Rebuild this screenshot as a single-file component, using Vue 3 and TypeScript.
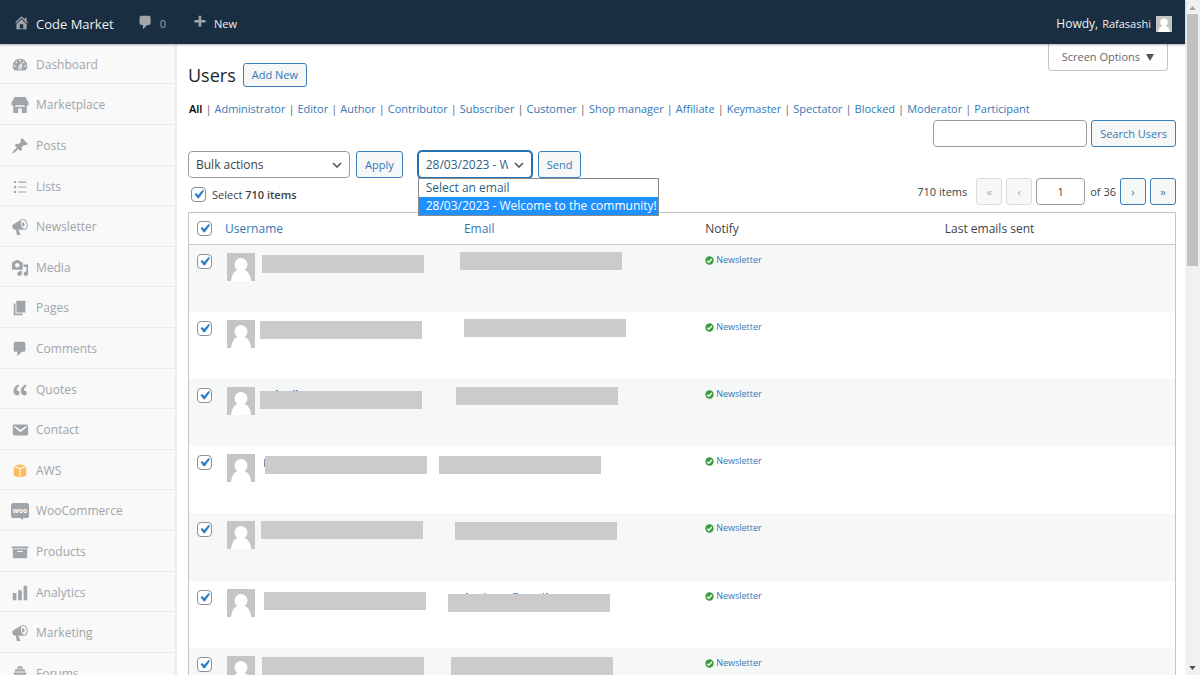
<script setup lang="ts">
import { computed, ref } from 'vue'

interface MenuItem {
  label: string
  icon: string
}

interface Mark {
  x: number
  y: number
  w: number
  h: number
  color: string
}

interface Mask {
  left: number
  top: number
  marks?: Mark[]
}

interface UserRow {
  id: number
  checked: boolean
  name: Mask
  email: Mask
}

const icons: Record<string, string> = {
  home: 'M16 8.5l1.53 1.53-1.06 1.06L10 4.6l-6.47 6.49-1.06-1.06L10 2.5l4 4v-2h2v4zm-6-2.46l6 5.99V18H4v-5.97zM12 17v-5H8v5h4z',
  comment:
    'M5 2h9c1.1 0 2 .9 2 2v7c0 1.1-.9 2-2 2h-2l-5 5v-5H5c-1.1 0-2-.9-2-2V4c0-1.1.9-2 2-2z',
  plus: 'M17 7v3h-5v5H9v-5H4V7h5V2h3v5h5z',
  dashboard:
    'M3.76 16h12.48A7.998 7.998 0 0 0 10 3a7.998 7.998 0 0 0-6.24 13zM10 4c.55 0 1 .45 1 1s-.45 1-1 1-1-.45-1-1 .45-1 1-1zM6 6c.55 0 1 .45 1 1s-.45 1-1 1-1-.45-1-1 .45-1 1-1zm8 0c.55 0 1 .45 1 1s-.45 1-1 1-1-.45-1-1 .45-1 1-1zm-5.37 5.55L12 7v6c0 1.1-.9 2-2 2s-2-.9-2-2c0-.57.24-1.08.63-1.45zM4 10c.55 0 1 .45 1 1s-.45 1-1 1-1-.45-1-1 .45-1 1-1zm12 0c.55 0 1 .45 1 1s-.45 1-1 1-1-.45-1-1 .45-1 1-1zm-5 3c0-.55-.45-1-1-1s-1 .45-1 1 .45 1 1 1 1-.45 1-1z',
  store:
    'M4 1h12l3.500 6.500v1.500c0 1.200-.9 2-2 2.200V19H12v-5H8v5H2.500v-7.800C1.400 11 .5 10.200.5 9V7.500zM4.500 10.800v1.200h11v-1.200c-.8 0-1.600-.3-2.200-.9-.8.700-2.200.9-3.300.1-1.100.8-2.500.6-3.300-.1-.6.600-1.400.9-2.200.9z',
  pin: 'M10.44 3.02l1.82-1.82 6.36 6.35-1.83 1.82c-1.05-.68-2.48-.57-3.41.36l-.75.75c-.92.93-1.04 2.35-.35 3.41l-1.83 1.82-2.41-2.41-2.8 2.79c-.42.42-3.38 2.71-3.8 2.29s1.86-3.39 2.28-3.81l2.79-2.79L4.1 9.36l1.83-1.82c1.05.69 2.48.57 3.4-.36l.75-.75c.93-.92 1.05-2.35.36-3.41z',
  list: 'M4.5 3.2a1.3 1.3 0 1 1 0 2.6 1.3 1.3 0 0 1 0-2.6zM8 4h9v1.2H8zM4.5 8.7a1.3 1.3 0 1 1 0 2.6 1.3 1.3 0 0 1 0-2.6zM8 9.4h9v1.2H8zM4.5 14.2a1.3 1.3 0 1 1 0 2.6 1.3 1.3 0 0 1 0-2.6zM8 15h9v1.2H8z',
  megaphone:
    'M18.15 5.94c.46 1.62.38 3.22-.02 4.48-.42 1.28-1.26 2.18-2.3 2.48-.16.06-.26.06-.4.06-.06.02-.12.02-.18.02-.06.02-.14.02-.22.02h-6.8l2.22 5.5c.02.14-.06.26-.14.34-.08.1-.24.16-.34.16H6.95c-.1 0-.26-.06-.34-.16-.08-.08-.16-.2-.14-.34l-1-5.5H4.25l-.02-.02c-.5.06-1.08-.18-1.54-.62s-.88-1.08-1.06-1.88c-.24-.8-.2-1.56-.02-2.2.18-.62.58-1.08 1.06-1.3l.02-.02 9-5.4c.1-.06.18-.1.24-.16.06-.04.14-.08.24-.12.16-.08.28-.12.5-.18 1.04-.3 2.24.1 3.22.98s1.84 2.24 2.26 3.86zm-2.58 5.98h-.02c.4-.1.74-.34 1.04-.7.58-.7.86-1.76.86-3.04 0-.64-.1-1.3-.28-1.98-.34-1.36-1.02-2.5-1.78-3.24s-1.68-1.1-2.46-.88c-.82.22-1.4.96-1.7 2-.32 1.04-.28 2.36.06 3.72.38 1.36 1 2.5 1.8 3.24.78.74 1.62 1.1 2.48.88zm-2.54-7.08c.22-.04.42-.02.62.04.38.16.76.48 1.02 1s.42 1.2.42 1.78c0 .3-.04.56-.12.8-.18.48-.44.84-.86.94-.34.1-.8-.06-1.14-.4s-.64-.86-.78-1.5c-.18-.62-.12-1.24.02-1.72s.48-.84.82-.94z',
  media:
    'M13 11V4c0-.55-.45-1-1-1h-1.67L9 1H5L3.67 3H2c-.55 0-1 .45-1 1v7c0 .55.45 1 1 1h10c.55 0 1-.45 1-1zM7 4.5c1.38 0 2.5 1.12 2.5 2.5S8.38 9.5 7 9.5 4.5 8.38 4.5 7 5.62 4.5 7 4.5zM14 6h5v10.5c0 1.38-1.12 2.5-2.5 2.5S14 17.88 14 16.5s1.12-2.5 2.5-2.5c.17 0 .34.02.5.05V9h-3V6zm-4 8.05V13h2v3.5c0 1.38-1.12 2.5-2.5 2.5S7 17.88 7 16.5 8.12 14 9.5 14c.17 0 .34.02.5.05z',
  page: 'M6 15V2h10v13H6zm-1 1h8v2H3V5h2v11z',
  quote:
    'M9.49 13.22c0-.74-.2-1.38-.61-1.9-.62-.78-1.83-.88-2.53-.72-.29-1.65 1.11-3.75 2.92-4.65L7.88 4c-2.73 1.3-5.42 4.28-4.96 8.05C3.21 14.43 4.59 16 6.54 16c.85 0 1.56-.25 2.12-.75s.83-1.18.83-2.03zm8.05 0c0-.74-.2-1.38-.61-1.9-.63-.78-1.83-.88-2.53-.72-.29-1.65 1.11-3.75 2.92-4.65L15.93 4c-2.73 1.3-5.41 4.28-4.95 8.05.29 2.38 1.66 3.95 3.61 3.95.85 0 1.56-.25 2.12-.75s.83-1.18.83-2.03z',
  email:
    'M3.87 4h13.25C18.37 4 19 4.59 19 5.79v8.42c0 1.19-.63 1.79-1.88 1.79H3.87c-1.25 0-1.88-.6-1.88-1.79V5.79c0-1.2.63-1.79 1.88-1.79zm6.62 8.6l6.74-5.53c.24-.2.43-.66.13-1.07-.29-.41-.82-.42-1.17-.17l-5.7 3.86L4.8 5.83c-.35-.25-.88-.24-1.17.17-.3.41-.11.87.13 1.07z',
  archive: 'M19 4v2H1V4h18zM2 7h16v10H2V7zm11 3V9H7v1h6z',
  chart: 'M18 18V2h-4v16h4zm-6 0V7H8v11h4zm-6 0v-8H2v8h4z',
  hive: 'M8 1.5h4l1.5 2.3h-7zM5 4.8h10l1.2 2.4H3.800zM3 8.400h14v2.400H3zM2.500 12h15v2.400h-15zM4 15.600h12L14.500 18h-9z',
}

const menu: MenuItem[] = [
  { label: 'Dashboard', icon: 'dashboard' },
  { label: 'Marketplace', icon: 'store' },
  { label: 'Posts', icon: 'pin' },
  { label: 'Lists', icon: 'list' },
  { label: 'Newsletter', icon: 'megaphone' },
  { label: 'Media', icon: 'media' },
  { label: 'Pages', icon: 'page' },
  { label: 'Comments', icon: 'comment' },
  { label: 'Quotes', icon: 'quote' },
  { label: 'Contact', icon: 'email' },
  { label: 'AWS', icon: 'aws' },
  { label: 'WooCommerce', icon: 'woo' },
  { label: 'Products', icon: 'archive' },
  { label: 'Analytics', icon: 'chart' },
  { label: 'Marketing', icon: 'megaphone' },
  { label: 'Forums', icon: 'hive' },
]

const roles: string[] = [
  'All',
  'Administrator',
  'Editor',
  'Author',
  'Contributor',
  'Subscriber',
  'Customer',
  'Shop manager',
  'Affiliate',
  'Keymaster',
  'Spectator',
  'Blocked',
  'Moderator',
  'Participant',
]

const emails: string[] = ['Select an email', '28/03/2023 - Welcome to the community!']
const chosenEmail = ref(emails[1])
const bulkAction = ref('Bulk actions')
const search = ref('')
const page = ref('1')
const selectEverything = ref(true)

const users = ref<UserRow[]>([
  { id: 1, checked: true, name: { left: 7, top: 10 }, email: { left: 21, top: 7 } },
  { id: 2, checked: true, name: { left: 5, top: 9 }, email: { left: 25, top: 7 } },
  {
    id: 3,
    checked: true,
    name: {
      left: 5,
      top: 12,
      marks: [
        { x: 16, y: -1, w: 2, h: 1, color: '#5b9bd5' },
        { x: 33, y: -1, w: 2, h: 1, color: '#5b9bd5' },
        { x: 36, y: -1, w: 2, h: 1, color: '#5b9bd5' },
      ],
    },
    email: { left: 17, top: 8 },
  },
  {
    id: 4,
    checked: true,
    name: { left: 10, top: 10, marks: [{ x: -1, y: 3, w: 1, h: 8, color: '#8f86ae' }] },
    email: { left: 0, top: 10 },
  },
  { id: 5, checked: true, name: { left: 6, top: 8 }, email: { left: 16, top: 9 } },
  {
    id: 6,
    checked: true,
    name: { left: 9, top: 11 },
    email: {
      left: 9,
      top: 13,
      marks: [
        { x: 18, y: -1, w: 2, h: 1, color: '#5b9bd5' },
        { x: 36, y: -1, w: 2, h: 1, color: '#8fb8de' },
        { x: 65, y: -1, w: 5, h: 1, color: '#5b9bd5' },
        { x: 95, y: -1, w: 1, h: 1, color: '#5b9bd5' },
        { x: 98, y: -1, w: 2, h: 1, color: '#5b9bd5' },
      ],
    },
  },
  { id: 7, checked: true, name: { left: 7, top: 9 }, email: { left: 12, top: 9 } },
])

const allChecked = computed<boolean>({
  get: () => users.value.every((u) => u.checked),
  set: (value) => users.value.forEach((u) => (u.checked = value)),
})

function offset(mask: Mask) {
  return { marginLeft: `${mask.left}px`, marginTop: `${mask.top}px` }
}
</script>

<template>
  <div class="screen">
    <div class="app">
      <header class="topbar">
        <a href="#" class="site">
          <svg class="icon" viewBox="0 0 20 20"><path fill-rule="evenodd" :d="icons.home" /></svg>
          <span>Code Market</span>
        </a>
        <a href="#" class="bubble">
          <svg class="icon" viewBox="0 0 20 20"><path :d="icons.comment" /></svg>
          <span>0</span>
        </a>
        <a href="#" class="new">
          <svg class="icon" viewBox="0 0 20 20"><path :d="icons.plus" /></svg>
          <span>New</span>
        </a>
        <a href="#" class="account">
          <span class="howdy">Howdy,</span>
          <span class="who">Rafasashi</span>
          <svg class="face" viewBox="0 0 28 28">
            <rect width="28" height="28" fill="#c5c5c5" />
            <circle cx="14" cy="11" r="6.500" />
            <path d="M4 28c.5-7 4-11 10-11s9.500 4 10 11z" />
          </svg>
        </a>
      </header>

      <div class="body">
        <nav class="sidebar" aria-label="Main menu">
          <a v-for="item in menu" :key="item.label" href="#" class="menu-item">
            <svg v-if="item.icon === 'aws'" class="icon aws" viewBox="0 0 20 20">
              <path d="M10 .5l8 2.500L10 5.600 2 3z" />
              <path d="M1 4.400l8.200 2.700v12.300L1 16.500z" />
              <path d="M19 4.400l-8.200 2.700v12.300L19 16.500z" />
            </svg>
            <svg v-else-if="item.icon === 'woo'" class="icon woo" viewBox="0 0 18 18">
              <path d="M2 1h14a2 2 0 0 1 2 2v11a2 2 0 0 1-2 2h-4v2l-3-2H2a2 2 0 0 1-2-2V3a2 2 0 0 1 2-2z" />
              <text x="9" y="11" text-anchor="middle">woo</text>
            </svg>
            <svg v-else class="icon" viewBox="0 0 20 20">
              <path fill-rule="evenodd" :d="icons[item.icon]" />
            </svg>
            <span>{{ item.label }}</span>
          </a>
        </nav>

        <main class="content">
          <div class="head">
            <div class="title">
              <h1>Users</h1>
              <button type="button" class="btn add">Add New</button>
            </div>
            <button type="button" class="screen-options">
              <span>Screen Options</span>
              <svg viewBox="0 0 8 7"><path d="M0 0h8L4 7z" /></svg>
            </button>
          </div>

          <ul class="roles">
            <li v-for="(role, i) in roles" :key="role">
              <a href="#" :class="{ current: i === 0 }">{{ role }}</a>
            </li>
          </ul>

          <form class="search" @submit.prevent>
            <input v-model="search" type="search" class="field" aria-label="Search users by name" />
            <button type="submit" class="btn">Search Users</button>
          </form>

          <div class="actions">
            <select v-model="bulkAction" class="field bulk" aria-label="Bulk action">
              <option>Bulk actions</option>
            </select>
            <button type="button" class="btn">Apply</button>
            <div class="picker">
              <select v-model="chosenEmail" class="field email" aria-label="Email to send">
                <option v-for="e in emails" :key="e">{{ e }}</option>
              </select>
              <ul class="options" role="listbox" aria-label="Emails">
                <li
                  v-for="e in emails"
                  :key="e"
                  role="option"
                  :aria-selected="e === chosenEmail"
                  :class="{ active: e === chosenEmail }"
                  @click="chosenEmail = e"
                >
                  {{ e }}
                </li>
              </ul>
            </div>
            <button type="button" class="btn">Send</button>
          </div>

          <div class="summary">
            <label class="everything">
              <input v-model="selectEverything" type="checkbox" class="check" />
              <span>Select <b>710 items</b></span>
            </label>
            <div class="pager">
              <span class="count">710 items</span>
              <button type="button" class="btn step" disabled aria-label="First page">«</button>
              <button type="button" class="btn step" disabled aria-label="Previous page">‹</button>
              <input v-model="page" type="text" class="field current-page" aria-label="Current page" />
              <span class="total">of 36</span>
              <button type="button" class="btn step" aria-label="Next page">›</button>
              <button type="button" class="btn step" aria-label="Last page">»</button>
            </div>
          </div>

          <table class="users">
            <colgroup>
              <col class="c-check" />
              <col class="c-name" />
              <col class="c-email" />
              <col class="c-notify" />
              <col />
            </colgroup>
            <thead>
              <tr>
                <th class="pick">
                  <input v-model="allChecked" type="checkbox" class="check" aria-label="Select all" />
                </th>
                <th class="h-name"><a href="#">Username</a></th>
                <th class="h-email"><a href="#">Email</a></th>
                <th>Notify</th>
                <th>Last emails sent</th>
              </tr>
            </thead>
            <tbody>
              <tr v-for="user in users" :key="user.id">
                <td class="pick">
                  <input
                    v-model="user.checked"
                    type="checkbox"
                    class="check"
                    :aria-label="`Select user ${user.id}`"
                  />
                </td>
                <td>
                  <div class="identity">
                    <svg class="avatar" viewBox="0 0 28 28">
                      <rect width="28" height="28" fill="#c5c5c5" />
                      <circle cx="14" cy="11.500" r="6.500" />
                      <path d="M4 28c.5-4 2-9 6-11h8c4 2 6 7 6 11z" />
                    </svg>
                    <svg class="mask" viewBox="0 0 162 18" :style="offset(user.name)">
                      <rect width="162" height="18" fill="#cbcbcb" />
                      <rect
                        v-for="m in user.name.marks ?? []"
                        :key="m.x"
                        :x="m.x"
                        :y="m.y"
                        :width="m.w"
                        :height="m.h"
                        :fill="m.color"
                      />
                    </svg>
                  </div>
                </td>
                <td class="d-email">
                  <svg class="mask" viewBox="0 0 162 18" :style="offset(user.email)">
                    <rect width="162" height="18" fill="#cbcbcb" />
                    <rect
                      v-for="m in user.email.marks ?? []"
                      :key="m.x"
                      :x="m.x"
                      :y="m.y"
                      :width="m.w"
                      :height="m.h"
                      :fill="m.color"
                    />
                  </svg>
                </td>
                <td>
                  <a href="#" class="notify">
                    <svg viewBox="0 0 10 10">
                      <circle cx="5" cy="5" r="4.600" />
                      <path d="M2.500 5.200l1.800 1.700L7.600 3.400" />
                    </svg>
                    <span>Newsletter</span>
                  </a>
                </td>
                <td></td>
              </tr>
            </tbody>
          </table>
        </main>
      </div>
    </div>

    <div class="scrollbar" aria-hidden="true">
      <svg viewBox="0 0 8 5"><path class="up" d="M4 0l4 5H0z" /></svg>
      <div class="thumb"></div>
      <svg class="down" viewBox="0 0 8 5"><path d="M0 0h8L4 5z" /></svg>
    </div>
  </div>
</template>

<style>
body {
  margin: 0;
  background: #fff;
}
</style>

<style scoped>
* {
  box-sizing: border-box;
}

.screen {
  display: flex;
  height: 100vh;
  overflow: hidden;
  font-family: 'Open Sans', 'Noto Sans', sans-serif;
  font-size: 12px;
  line-height: 16px;
  color: #3c434a;
}

.app {
  flex: 1;
  min-width: 0;
  display: flex;
  flex-direction: column;
}

a {
  color: #3577b5;
  text-decoration: none;
}

button,
input,
select {
  font: inherit;
  color: inherit;
  margin: 0;
}

.icon {
  width: 18px;
  height: 18px;
  flex: none;
  fill: #a0a5aa;
}

/* top bar */
.topbar {
  display: flex;
  align-items: center;
  height: 44px;
  flex: none;
  padding: 4px 13px 0;
  background: #192e41;
  box-shadow: 0 1px 2px rgba(0, 0, 0, 0.3);
  position: relative;
}

.topbar a {
  display: flex;
  align-items: center;
  color: #f0f0f1;
}

.topbar .icon {
  width: 17px;
  height: 17px;
  margin-bottom: 3px;
}

.site {
  gap: 6px;
  font-size: 13px;
}

.bubble {
  gap: 6px;
  margin-left: 23px;
  font-size: 11px;
}

.topbar .bubble span {
  color: #a0a5aa;
}

.new {
  gap: 6px;
  margin-left: 25px;
  font-size: 11px;
}

.account {
  gap: 4px;
  margin-left: auto;
  font-size: 12px;
}

.who {
  font-size: 11px;
}

.face {
  width: 16px;
  height: 16px;
  margin-left: 1px;
  fill: #fff;
}

.body {
  flex: 1;
  min-height: 0;
  display: flex;
}

/* side menu */
.sidebar {
  flex: none;
  width: 177px;
  overflow: hidden;
  background: #f9f9f9;
  border-right: 2px solid #ebebeb;
}

.menu-item {
  display: flex;
  align-items: center;
  gap: 7px;
  height: 41px;
  padding: 2px 0 0 11px;
  border-bottom: 1px solid #ececec;
  color: #a0a5aa;
}

.menu-item:nth-child(5n + 1),
.menu-item:nth-child(5n + 4) {
  height: 40px;
}

.icon.aws {
  fill: #fcbb5c;
  padding: 2px;
}

.woo text {
  fill: #fff;
  font-size: 7px;
  font-weight: 700;
}

/* content */
.content {
  flex: 1;
  min-width: 0;
  padding: 0 9px 0 11px;
  overflow: hidden;
}

.head {
  display: flex;
  justify-content: space-between;
  align-items: flex-start;
}

.title {
  display: flex;
  align-items: center;
  gap: 7px;
  padding-top: 19px;
}

h1 {
  margin: 0;
  font-size: 18px;
  line-height: 24px;
  font-weight: 400;
  color: #1d2327;
}

.btn {
  height: 27px;
  padding: 0 8px;
  border: 1px solid #3a80bd;
  border-radius: 3px;
  background: #f6f7f7;
  color: #3577b5;
  font-size: 11px;
  white-space: nowrap;
}

.btn.add {
  height: 24px;
}

.screen-options {
  display: flex;
  align-items: center;
  gap: 6px;
  height: 27px;
  margin-right: 8px;
  padding: 0 13px;
  border: 1px solid #c3c4c7;
  border-top: 0;
  border-radius: 0 0 4px 4px;
  background: #fff;
  color: #646970;
  font-size: 11px;
}

.screen-options svg {
  width: 8px;
  height: 7px;
  fill: #50575e;
}

.roles {
  display: flex;
  margin: 14px 0 0;
  padding: 0 0 0 1px;
  list-style: none;
  font-size: 11px;
  white-space: nowrap;
}

.roles li + li::before {
  content: '|';
  padding: 0 3px;
  color: #646970;
}

.roles .current {
  color: #000;
  font-weight: 600;
}

.field {
  height: 27px;
  border: 1px solid #9a9da1;
  border-radius: 4px;
  background: #fff;
  outline: none;
  appearance: none;
}

.search {
  display: flex;
  justify-content: flex-end;
  gap: 4px;
  margin-top: 3px;
}

.search .field {
  width: 154px;
  padding: 0 8px;
}

.actions {
  display: flex;
  gap: 6px;
  margin-top: 4px;
}

select.field {
  padding: 0 23px 0 7px;
  background: #fff
    url("data:image/svg+xml,%3Csvg xmlns='http://www.w3.org/2000/svg' width='10' height='6'%3E%3Cpath d='M1 1l4 4 4-4' fill='none' stroke='%2350575e' stroke-width='1.600'/%3E%3C/svg%3E")
    no-repeat right 7px center;
}

.bulk {
  width: 162px;
}

.picker {
  position: relative;
  margin-left: 9px;
}

select.email {
  width: 114px;
  border-color: #2271b1;
  box-shadow: 0 0 0 1px #2271b1;
  color: #2c5f85;
}

.options {
  position: absolute;
  z-index: 1;
  top: 27px;
  left: 0;
  min-width: 239px;
  margin: 0;
  padding: 0;
  border: 1px solid #8a8a8a;
  background: #fff;
  list-style: none;
  line-height: 18px;
  white-space: nowrap;
  color: #2c5f85;
}

.options li {
  padding: 0 1px 0 7px;
}

.options .active {
  background: #1e90ff;
  color: #fff;
}

.summary {
  display: flex;
  justify-content: space-between;
  align-items: flex-start;
}

.everything {
  display: flex;
  align-items: center;
  gap: 6px;
  height: 33px;
  padding-left: 3px;
  font-size: 11px;
}

.everything b {
  font-weight: 600;
}

.check {
  display: block;
  appearance: none;
  flex: none;
  width: 15px;
  height: 15px;
  border: 1px solid #8c8f94;
  border-radius: 4px;
  background: #fff;
}

.check:checked {
  background: #fff
    url("data:image/svg+xml,%3Csvg xmlns='http://www.w3.org/2000/svg' viewBox='0 0 20 20'%3E%3Cpath d='M14.830 4.890l1.340.94-5.810 8.380H9.020L5.780 9.670l1.340-1.250 2.570 2.400z' fill='%232a7cc4' stroke='%232a7cc4' stroke-width='.6'/%3E%3C/svg%3E")
    no-repeat center / 17px;
}

.pager {
  display: flex;
  align-items: center;
  gap: 4px;
  font-size: 11px;
}

.count {
  margin-right: 5px;
}

.total {
  margin-left: 1px;
}

.btn.step {
  width: 26px;
  padding: 0;
}

.btn.step:disabled {
  border-color: #dcdcde;
  color: #a7aaad;
}

.current-page {
  width: 49px;
  padding: 0;
  text-align: center;
}

/* users table */
.users {
  width: 100%;
  margin-top: 1px;
  border: 1px solid #c3c4c7;
  border-spacing: 0;
  table-layout: fixed;
}

.c-check {
  width: 30px;
}

.c-name {
  width: 22%;
}

.c-email {
  width: 26.5%;
}

.c-notify {
  width: 24.3%;
}

th {
  height: 32px;
  padding: 0 8px;
  border-bottom: 1px solid #c9cacd;
  font-weight: 400;
  text-align: left;
}

td {
  height: 67px;
  padding: 0 8px;
  vertical-align: top;
}

tbody tr:nth-child(5n) td {
  height: 68px;
}

tbody tr:nth-child(odd) td {
  background: #f6f7f7;
}

.pick {
  padding: 0 0 0 8px;
}

td.pick {
  padding-top: 9px;
}

th.h-name {
  padding-left: 6px;
}

th.h-email {
  padding-left: 28px;
}

td.d-email {
  padding: 0 0 0 3px;
}

.identity {
  display: flex;
  align-items: flex-start;
}

.avatar {
  flex: none;
  width: 28px;
  height: 28px;
  margin-top: 8px;
  fill: #fff;
}

.mask {
  display: block;
  flex: none;
  width: 162px;
  height: 18px;
  overflow: visible;
}

.notify {
  display: inline-flex;
  align-items: center;
  gap: 2px;
  margin-top: 7px;
  font-size: 9px;
}

.notify svg {
  width: 9px;
  height: 9px;
}

.notify circle {
  fill: #3c9a40;
}

.notify path {
  fill: none;
  stroke: #fff;
  stroke-width: 1.500;
}

/* page scrollbar */
.scrollbar {
  flex: none;
  display: flex;
  flex-direction: column;
  align-items: center;
  width: 15px;
  padding: 6px 0 5px;
  background: #f1f1f1;
}

.scrollbar svg {
  width: 7px;
  height: 4px;
  fill: #505050;
}

.scrollbar .up {
  fill: #a3a3a3;
}

.scrollbar .down {
  margin-top: auto;
}

.thumb {
  width: 11px;
  height: 38%;
  margin-top: 4px;
  background: #c1c1c1;
}
</style>
